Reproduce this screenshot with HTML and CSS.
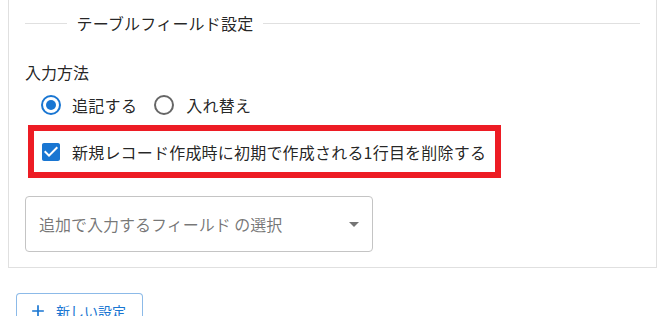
FILE: index.html
```html
<!DOCTYPE html>
<html lang="ja">
<head>
<meta charset="utf-8">
<link rel="stylesheet" href="styles.css">
</head>
<body>
<div class="panel">
  <div class="divider"><span class="divider-text">テーブルフィールド設定</span></div>
  <div class="label">入力方法</div>
  <div class="radio-group">
    <label class="radio">
      <svg class="radio-icon checked" viewBox="0 0 24 24" width="24" height="24"><circle cx="12" cy="12" r="9" fill="none" stroke="currentColor" stroke-width="2"/><circle cx="12" cy="12" r="5" fill="currentColor"/></svg>
      <span>追記する</span>
    </label>
    <label class="radio">
      <svg class="radio-icon" viewBox="0 0 24 24" width="24" height="24"><circle cx="12" cy="12" r="9" fill="none" stroke="currentColor" stroke-width="2"/></svg>
      <span>入れ替え</span>
    </label>
  </div>
  <div class="highlight">
    <label class="check">
      <svg class="check-icon" viewBox="0 0 24 24" width="24" height="24"><path fill="currentColor" d="M19 3H5c-1.11 0-2 .9-2 2v14c0 1.1.89 2 2 2h14c1.11 0 2-.9 2-2V5c0-1.1-.89-2-2-2zm-9 14l-5-5 1.41-1.41L10 14.17l7.59-7.59L19 8l-9 9z"/></svg>
      <span>新規レコード作成時に初期で作成される1行目を削除する</span>
    </label>
  </div>
  <div class="select">
    <span class="placeholder">追加で入力するフィールド の選択</span>
    <svg class="arrow" viewBox="0 0 24 24" width="24" height="24"><path fill="currentColor" d="M7 10l5 5 5-5z"/></svg>
  </div>
</div>
<button class="add-btn" type="button">
  <svg class="add-icon" viewBox="0 0 24 24" width="20" height="20"><path fill="currentColor" d="M19 13h-6v6h-2v-6H5v-2h6V5h2v6h6v2z"/></svg>
  <span>新しい設定</span>
</button>
</body>
</html>
```

FILE: styles.css
```css
* { box-sizing: border-box; }
body {
  margin: 0;
  background: #fff;
  font-family: "Noto Sans CJK JP", "Noto Sans", Roboto, sans-serif;
  color: rgba(0, 0, 0, 0.87);
  font-size: 16px;
  overflow: hidden;
}
.panel {
  margin: -20px 0 0 8px;
  width: 649px;
  border: 1px solid #e0e0e0;
  padding: 30px 16px 15px 16px;
}
.divider {
  display: flex;
  align-items: center;
  height: 24px;
}
.divider::before,
.divider::after {
  content: "";
  border-top: 1px solid #e0e0e0;
}
.divider::before { flex: 1; }
.divider::after { flex: 9; }
.divider-text {
  padding: 0 9.6px;
  line-height: 24px;
  white-space: nowrap;
  letter-spacing: 0.2px;
}
.label {
  margin-top: 25px;
  line-height: 24px;
}
.radio-group {
  display: flex;
  align-items: center;
  height: 41px;
  padding-left: 14px;
}
.radio {
  display: flex;
  align-items: center;
  gap: 9px;
  margin-right: 15px;
  line-height: 24px;
  letter-spacing: 0.3px;
}
.radio + .radio { margin-right: 0; }
.radio:nth-child(2) { gap: 10px; }
.radio-icon { color: rgba(0, 0, 0, 0.6); flex: none; }
.radio-icon.checked { color: #1976d2; }
.highlight {
  margin-left: 3px;
  width: 473px;
  height: 53px;
  border: 6px solid #ed1c24;
  display: flex;
  align-items: center;
  padding-left: 5px;
}
.check {
  display: flex;
  align-items: center;
  gap: 9px;
  line-height: 24px;
  white-space: nowrap;
  letter-spacing: 0.2px;
}
.check-icon { color: #1976d2; flex: none; }
.select {
  margin-top: 18px;
  width: 348px;
  height: 56px;
  border: 1px solid #c4c4c4;
  border-radius: 4px;
  display: flex;
  align-items: center;
  justify-content: space-between;
  padding: 0 6px 0 13px;
}
.placeholder {
  color: rgba(0, 0, 0, 0.55);
  line-height: 24px;
}
.arrow { color: rgba(0, 0, 0, 0.54); }
.add-btn {
  margin: 25px 0 0 16px;
  height: 36px;
  width: 127px;
  border: 1px solid rgba(25, 118, 210, 0.5);
  border-radius: 4px;
  background: #fff;
  color: #1976d2;
  font-family: inherit;
  font-size: 14px;
  display: flex;
  align-items: center;
  padding: 0 15px 0 11px;
  gap: 8px;
}
.add-icon { flex: none; }
```
